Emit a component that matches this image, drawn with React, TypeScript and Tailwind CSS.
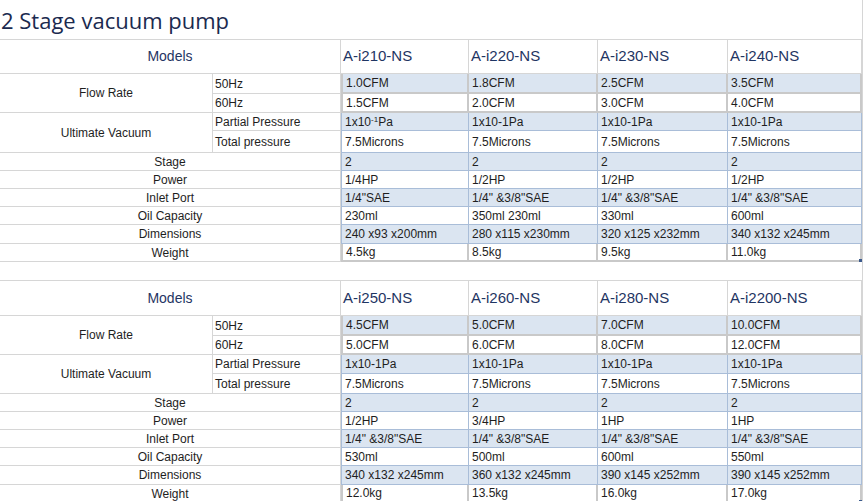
import React from "react";

type Row = {
  label: string;
  sub?: string;
  values: React.ReactNode[];
  tone: "blue" | "white";
  edge: "thick" | "thin";
  h: number;
};

type Table = {
  models: string[];
  headerH: number;
  rows: Row[];
};

const pa1 = (
  <span>
    1x10<span className="relative -top-[4px] text-[8px] leading-none">-1</span>Pa
  </span>
);

const tables: Table[] = [
  {
    models: ["A-i210-NS", "A-i220-NS", "A-i230-NS", "A-i240-NS"],
    headerH: 34,
    rows: [
      { label: "Flow Rate", sub: "50Hz", values: ["1.0CFM", "1.8CFM", "2.5CFM", "3.5CFM"], tone: "blue", edge: "thick", h: 20 },
      { label: "Flow Rate", sub: "60Hz", values: ["1.5CFM", "2.0CFM", "3.0CFM", "4.0CFM"], tone: "white", edge: "thick", h: 19 },
      { label: "Ultimate Vacuum", sub: "Partial Pressure", values: [pa1, "1x10-1Pa", "1x10-1Pa", "1x10-1Pa"], tone: "blue", edge: "thin", h: 18 },
      { label: "Ultimate Vacuum", sub: "Total pressure", values: ["7.5Microns", "7.5Microns", "7.5Microns", "7.5Microns"], tone: "white", edge: "thin", h: 22 },
      { label: "Stage", values: ["2", "2", "2", "2"], tone: "blue", edge: "thin", h: 18 },
      { label: "Power", values: ["1/4HP", "1/2HP", "1/2HP", "1/2HP"], tone: "white", edge: "thin", h: 18 },
      { label: "Inlet Port", values: ["1/4\"SAE", "1/4\" &3/8\"SAE", "1/4\" &3/8\"SAE", "1/4\" &3/8\"SAE"], tone: "blue", edge: "thin", h: 18 },
      { label: "Oil Capacity", values: ["230ml", "350ml 230ml", "330ml", "600ml"], tone: "white", edge: "thin", h: 18 },
      { label: "Dimensions", values: ["240 x93 x200mm", "280 x115 x230mm", "320 x125 x232mm", "340 x132 x245mm"], tone: "blue", edge: "thin", h: 19 },
      { label: "Weight", values: ["4.5kg", "8.5kg", "9.5kg", "11.0kg"], tone: "white", edge: "thick", h: 18 },
    ],
  },
  {
    models: ["A-i250-NS", "A-i260-NS", "A-i280-NS", "A-i2200-NS"],
    headerH: 35,
    rows: [
      { label: "Flow Rate", sub: "50Hz", values: ["4.5CFM", "5.0CFM", "7.0CFM", "10.0CFM"], tone: "blue", edge: "thick", h: 20 },
      { label: "Flow Rate", sub: "60Hz", values: ["5.0CFM", "6.0CFM", "8.0CFM", "12.0CFM"], tone: "white", edge: "thick", h: 19 },
      { label: "Ultimate Vacuum", sub: "Partial Pressure", values: ["1x10-1Pa", "1x10-1Pa", "1x10-1Pa", "1x10-1Pa"], tone: "blue", edge: "thin", h: 19 },
      { label: "Ultimate Vacuum", sub: "Total pressure", values: ["7.5Microns", "7.5Microns", "7.5Microns", "7.5Microns"], tone: "white", edge: "thin", h: 20 },
      { label: "Stage", values: ["2", "2", "2", "2"], tone: "blue", edge: "thin", h: 18 },
      { label: "Power", values: ["1/2HP", "3/4HP", "1HP", "1HP"], tone: "white", edge: "thin", h: 18 },
      { label: "Inlet Port", values: ["1/4\" &3/8\"SAE", "1/4\" &3/8\"SAE", "1/4\" &3/8\"SAE", "1/4\" &3/8\"SAE"], tone: "blue", edge: "thin", h: 18 },
      { label: "Oil Capacity", values: ["530ml", "500ml", "600ml", "550ml"], tone: "white", edge: "thin", h: 18 },
      { label: "Dimensions", values: ["340 x132 x245mm", "360 x132 x245mm", "390 x145 x252mm", "390 x145 x252mm"], tone: "blue", edge: "thin", h: 19 },
      { label: "Weight", values: ["12.0kg", "13.5kg", "16.0kg", "17.0kg"], tone: "white", edge: "thick", h: 18 },
    ],
  },
];

const SpecTable = ({ table }: { table: Table }) => {
  const rowTemplate = [table.headerH, ...table.rows.map((r) => r.h)]
    .map((h) => `${h}px`)
    .join(" ");

  return (
    <div
      className="grid grid-cols-[213px_128px_128px_129px_130px_134px] border-t border-[#d6d6d6]"
      style={{ gridTemplateRows: rowTemplate }}
    >
      <div className="col-span-2 flex items-center justify-center border-b border-r border-[#d6d6d6] text-[14px] text-[#1f3563]">
        Models
      </div>
      {table.models.map((m) => (
        <div
          key={m}
          className="flex items-center border-b border-r border-[#d6d6d6] pl-[2px] text-[15px] text-[#1f3563]"
        >
          {m}
        </div>
      ))}

      {table.rows.map((row, i) => {
        const prev = table.rows[i - 1];
        const next = table.rows[i + 1];
        const groupStart = row.sub && (!prev || prev.label !== row.label);
        const inGroup = row.sub && next && next.label === row.label;
        const data = row.values.map((v, j) => (
          <div
            key={j}
            className={`relative flex items-center pl-[3px] text-[12px] text-[#1e1e1e] ${
              row.tone === "blue" ? "bg-[#dbe5f1]" : "bg-white"
            } ${
              row.edge === "thick"
                ? "border-b-2 border-r-2 border-[#c9c9c9]"
                : "border-b border-r border-[#a9bdd8]"
            } ${
              j === 0
                ? row.edge === "thick"
                  ? "border-l-2 border-l-[#c9c9c9]"
                  : "border-l border-l-[#a9bdd8]"
                : ""
            }`}
          >
            {v}
            {j === 3 && i === table.rows.length - 1 && (
              <span className="absolute -bottom-[2px] -right-[2px] h-[3px] w-[3px] bg-[#3b5a8c]" />
            )}
          </div>
        ));

        return (
          <React.Fragment key={i}>
            {row.sub ? (
              <>
                {groupStart && (
                  <div
                    className={`flex items-center justify-center border-b border-r border-[#d6d6d6] text-[12px] text-[#1e1e1e] ${
                      inGroup ? "row-span-2" : ""
                    }`}
                  >
                    {row.label}
                  </div>
                )}
                <div className="flex items-center border-b border-r border-[#d6d6d6] pl-[2px] text-[12px] text-[#1e1e1e]">
                  {row.sub}
                </div>
              </>
            ) : (
              <div className="col-span-2 flex items-center justify-center border-b border-r border-[#d6d6d6] text-[12px] text-[#1e1e1e]">
                {row.label}
              </div>
            )}
            {data}
          </React.Fragment>
        );
      })}
    </div>
  );
};

export default function App() {
  return (
    <div className="h-[501px] w-[865px] overflow-hidden bg-white font-['Liberation_Sans',Arial,sans-serif]">
      <div className="w-[863px] border-r border-[#d6d6d6]">
        <div className="flex h-[39px] items-center pl-[1px]">
          <h1 className="font-['Open_Sans','Noto_Sans',sans-serif] text-[22px] leading-none text-[#1b2a4f]">
            2 Stage vacuum pump
          </h1>
        </div>
        <SpecTable table={tables[0]} />
        <div className="h-[18px]" />
        <SpecTable table={tables[1]} />
      </div>
    </div>
  );
}
